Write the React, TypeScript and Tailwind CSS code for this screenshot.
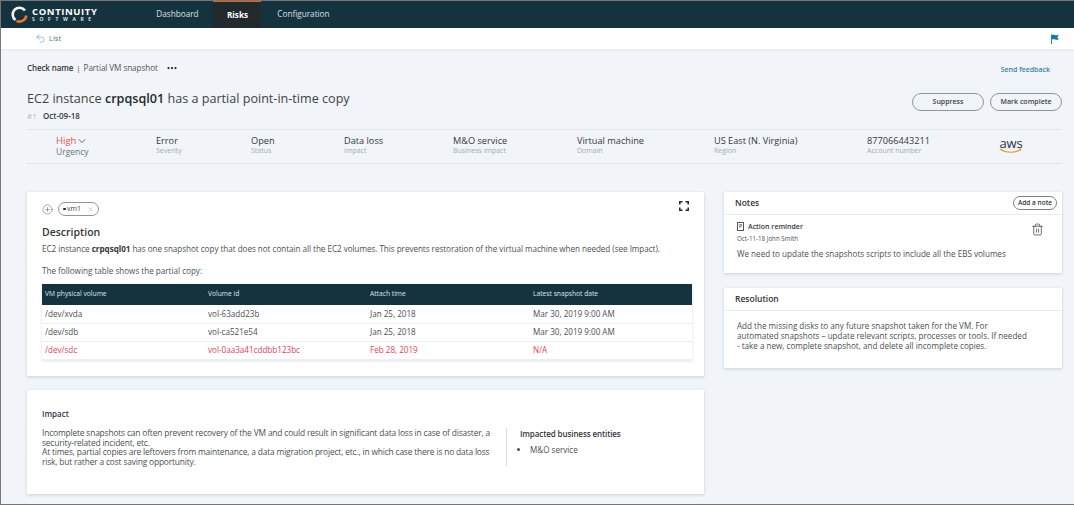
import { ChevronDown, CirclePlus, Ellipsis, Trash2, Undo2, X } from 'lucide-react';

const attrs = [
  { value: 'Error', label: 'Severity', w: 'w-[95px]' },
  { value: 'Open', label: 'Status', w: 'w-[93px]' },
  { value: 'Data loss', label: 'Impact', w: 'w-[109px]' },
  { value: 'M&O service', label: 'Business impact', w: 'w-[124px]' },
  { value: 'Virtual machine', label: 'Domain', w: 'w-[137px]' },
  { value: 'US East (N. Virginia)', label: 'Region', w: 'w-[153px]' },
  { value: '877066443211', label: 'Account number', w: 'w-[132px]' },
];

const rows = [
  { path: '/dev/xvda', id: 'vol-63add23b', time: 'Jan 25, 2018', latest: 'Mar 30, 2019 9:00 AM' },
  { path: '/dev/sdb', id: 'vol-ca521e54', time: 'Jan 25, 2018', latest: 'Mar 30, 2019 9:00 AM' },
  { path: '/dev/sdc', id: 'vol-0aa3a41cddbb123bc', time: 'Feb 28, 2019', latest: 'N/A', bad: true },
];

function Logo() {
  return (
    <div className="flex items-center gap-[4px]">
      <svg width="17" height="17" viewBox="0 0 17 17" fill="none">
        <path d="M14 4.500A6.800 6.800 0 1 0 4.500 14" stroke="#f3f4f4" strokeWidth="2.600" />
        <path d="M5.500 14.800A6.800 6.800 0 0 0 15.300 9.500" stroke="#e8752c" strokeWidth="2.600" />
      </svg>
      <div className="flex flex-col text-white leading-none">
        <span className="text-[9.500px] font-bold tracking-[0.6px] leading-[9px]">CONTINUITY</span>
        <span className="text-[5px] font-semibold tracking-[4.700px] leading-[6px]">SOFTWARE</span>
      </div>
    </div>
  );
}

function Flag() {
  return (
    <svg width="10" height="10" viewBox="0 0 10 10">
      <path d="M1 0.5h0.9V10H1z" fill="#17799f" />
      <path d="M1.9 1c2-1 3.400 1 6.900-.2L7.400 3.200l1.400 2.300c-3 1-4.600-1-6.900 0z" fill="#17799f" />
    </svg>
  );
}

function Corners() {
  return (
    <svg width="10" height="10" viewBox="0 0 10 10" fill="none" stroke="#23282c" strokeWidth="1.500">
      <path d="M.8 3.500V.8h2.700M6.500 .8h2.700v2.700M9.200 6.500v2.700H6.500M3.500 9.200H.8V6.500" />
    </svg>
  );
}

function NoteIcon() {
  return (
    <div className="w-[7px] h-[9px] border border-[#555] flex items-center justify-center text-[5px] leading-none text-[#444]">P</div>
  );
}

function AwsLogo() {
  return (
    <div className="flex flex-col items-center w-[24px] text-[#2b3238]">
      <span className="text-[13px] leading-[10px] tracking-[-0.2px]">aws</span>
      <svg width="24" height="6" viewBox="0 0 24 6" fill="none">
        <path d="M1 1c6 4.200 15 4.200 20 .8" stroke="#f0962a" strokeWidth="1.200" />
        <path d="M19.500 .8l3-.3-.6 2.500z" fill="#f0962a" />
      </svg>
    </div>
  );
}

function Card({ title, right, children, body }: { title: string; right?: React.ReactNode; children: React.ReactNode; body: string }) {
  return (
    <section className="bg-white shadow-[0_1px_3px_rgba(80,100,120,0.25)]">
      <div className="h-[23px] flex items-center justify-between pl-[11px] pr-[5px] border-b border-[#e8ecef]">
        <h3 className="text-[8.500px] font-semibold text-[#2f3438]">{title}</h3>
        {right}
      </div>
      <div className={body}>{children}</div>
    </section>
  );
}

export default function App() {
  return (
    <div className="w-[1074px] h-[505px] overflow-hidden flex flex-col bg-[#f1f5f9] border border-r-0 border-[#777] text-[#4a4f53] font-['Open_Sans',sans-serif]">
      <header className="h-[27px] shrink-0 bg-[#14333f] flex items-stretch pl-[10px]">
        <Logo />
        <nav className="flex items-stretch ml-[44px] text-[8.200px] text-[#d9e0e3]">
          <a className="w-[72px] flex items-center justify-center">Dashboard</a>
          <a className="w-[48px] flex items-center justify-center bg-[#222a2e] border-t border-[#d9662c] font-bold text-white">Risks</a>
          <a className="w-[84px] flex items-center justify-center">Configuration</a>
        </nav>
      </header>

      <div className="h-[23px] shrink-0 bg-white border-b-2 border-[#e9edf0] flex items-center justify-between pl-[34px] pr-[14px]">
        <div className="flex items-center gap-[3px] text-[7.500px] text-[#52798e]">
          <Undo2 size={11} strokeWidth={1.200} className="text-[#4b93b8]" />
          <span>List</span>
        </div>
        <Flag />
      </div>

      <main className="flex-1 pl-[26px] pr-[11px]">
        <div className="flex items-center justify-between pt-[9px] h-[26px] pr-[1px]">
          <div className="flex items-center text-[8px]">
            <span className="font-semibold text-[#33383c] tracking-[-0.120px]">Check name</span>
            <span className="mx-[3px] text-[#555]">|</span>
            <span className="text-[8.200px] text-[#555] tracking-[-0.100px]">Partial VM snapshot</span>
            <Ellipsis size={12} strokeWidth={2.500} className="ml-[8px] text-[#23282c]" />
          </div>
          <a className="text-[7px] text-[#3f7e9c] font-semibold mt-[3px] mr-[12px]">Send feedback</a>
        </div>

        <div className="flex justify-between items-start mt-[13px] pr-[1px]">
          <div>
            <h1 className="text-[12.600px] leading-[18px] text-[#3c4145]">
              EC2 instance <b className="font-semibold text-[#23282c]">crpqsql01</b> has a partial point-in-time copy
            </h1>
            <div className="flex text-[8px] mt-[2px] leading-[11px]">
              <span className="text-[#b4bbc0] w-[16px]">#1</span>
              <span className="text-[#33383c] font-semibold">Oct-09-18</span>
            </div>
          </div>
          <div className="flex gap-[6px] mt-[3px]">
            <button className="w-[72px] h-[18px] rounded-full border border-[#8b979e] text-[7px] font-semibold text-[#3c4145]">Suppress</button>
            <button className="w-[72px] h-[18px] rounded-full border border-[#8b979e] text-[7px] font-semibold text-[#3c4145]">Mark complete</button>
          </div>
        </div>

        <div className="w-[1035px] mt-[8px] h-[35px] border-y border-[#e1e6ea] flex items-center pl-[29px] pb-[2px]">
          <div className="w-[100px] leading-[10px]">
            <div className="flex items-center text-[9.500px] text-[#e2544f]">
              High <ChevronDown size={12} strokeWidth={1.500} className="text-[#33383c]" />
            </div>
            <div className="text-[8.500px] text-[#6b7277]">Urgency</div>
          </div>
          {attrs.map((a) => (
            <div key={a.label} className={`${a.w} leading-[10px]`}>
              <div className="text-[9.200px] text-[#33383c] font-medium">{a.value}</div>
              <div className="text-[7px] text-[#a3abb0]">{a.label}</div>
            </div>
          ))}
          <AwsLogo />
        </div>

        <div className="flex gap-[20px] mt-[28px]">
          <div className="w-[677px] flex flex-col gap-[14px]">
            <section className="h-[184px] bg-white shadow-[0_1px_3px_rgba(80,100,120,0.25)] pt-[10px] pl-[15px] pr-[15px]">
              <div className="flex items-center justify-between">
                <div className="flex items-center gap-[5px]">
                  <CirclePlus size={11} strokeWidth={1} className="text-[#444]" />
                  <span className="h-[14px] px-[4px] rounded-full border border-[#8b979e] flex items-center text-[7px] text-[#3c4145]">
                    <i className="w-[2.500px] h-[2.500px] mr-[1.500px] rounded-full bg-[#222]" />vm1
                    <X size={7} strokeWidth={1.200} className="ml-[6px] text-[#777]" />
                  </span>
                </div>
                <div className="-mt-[7px]"><Corners /></div>
              </div>
              <h2 className="text-[10.500px] leading-[14px] font-semibold text-[#33383c] mt-[9px]">Description</h2>
              <p className="text-[8.100px] leading-[12px] mt-[4px] tracking-[-0.030px]">
                EC2 instance <b className="font-bold text-[#33383c]">crpqsql01</b> has one snapshot copy that does not contain all the EC2 volumes. This prevents restoration of the virtual machine when needed (see Impact).
              </p>
              <p className="text-[8.100px] leading-[12px] mt-[10px]">The following table shows the partial copy:</p>
              <table className="w-[650px] mt-[7px] table-fixed text-[8.100px] shadow-[0_1px_3px_rgba(80,100,120,0.2)]">
                <thead>
                  <tr className="h-[21px] bg-[#14333f] text-[6.700px] text-[#dfe5e8] text-left">
                    <th className="w-[166px] pl-[3px] font-medium">VM physical volume</th>
                    <th className="w-[162px] font-medium">Volume id</th>
                    <th className="w-[163px] font-medium">Attach time</th>
                    <th className="font-medium">Latest snapshot date</th>
                  </tr>
                </thead>
                <tbody>
                  {rows.map((r) => (
                    <tr key={r.path} className={`h-[18px] border-b border-[#eceff1] ${r.bad ? 'text-[#dd4460]' : ''}`}>
                      <td className="pl-[3px]">{r.path}</td>
                      <td>{r.id}</td>
                      <td>{r.time}</td>
                      <td>{r.latest}</td>
                    </tr>
                  ))}
                </tbody>
              </table>
            </section>

            <section className="h-[104px] bg-white shadow-[0_1px_3px_rgba(80,100,120,0.25)] pt-[18px] pl-[15px] flex flex-col">
              <h3 className="text-[8px] leading-[12px] font-semibold text-[#33383c]">Impact</h3>
              <div className="flex mt-[8px]">
                <p className="w-[464px] pr-[4px] text-[8.400px] leading-[9.500px] tracking-[-0.160px]">
                  Incomplete snapshots can often prevent recovery of the VM and could result in significant data loss in case of disaster, a security-related incident, etc.
                  <br />
                  At times, partial copies are leftovers from maintenance, a data migration project, etc., in which case there is no data loss risk, but rather a cost saving opportunity.
                </p>
                <div className="border-l border-[#d5dade] pl-[13px] h-[38px] text-[8px]">
                  <div className="font-semibold text-[#33383c] leading-[9px] mt-[1px] tracking-[-0.100px]">Impacted business entities</div>
                  <ul className="list-disc ml-[10px] mt-[6px] leading-[12px] text-[8.100px]">
                    <li>M&amp;O service</li>
                  </ul>
                </div>
              </div>
            </section>
          </div>

          <div className="w-[338px] flex flex-col gap-[15px]">
            <Card
              title="Notes"
              body="h-[58px] pl-[13px] pr-[18px] pt-[6px] flex justify-between"
              right={<button className="w-[44px] h-[14px] rounded-full border border-[#77848c] text-[6.500px] font-semibold text-[#33383c]">Add a note</button>}
            >
              <div>
                <div className="flex items-center gap-[4px] text-[7px] font-semibold text-[#33383c] leading-[11px]"><NoteIcon />Action reminder</div>
                <div className="text-[6.200px] leading-[9px] mt-[2px]">Oct-11-18 John Smith</div>
                <p className="text-[8.100px] leading-[12px] mt-[5px]">We need to update the snapshots scripts to include all the EBS volumes</p>
              </div>
              <Trash2 size={13} strokeWidth={1.300} className="text-[#33383c] mt-[2px]" />
            </Card>
            <Card title="Resolution" body="h-[57px] pl-[13px] pr-[32px] pt-[10px] text-[8.100px] leading-[10px]">
              <p>Add the missing disks to any future snapshot taken for the VM. For automated snapshots – update relevant scripts, processes or tools. If needed - take a new, complete snapshot, and delete all incomplete copies.</p>
            </Card>
          </div>
        </div>
      </main>
    </div>
  );
}
